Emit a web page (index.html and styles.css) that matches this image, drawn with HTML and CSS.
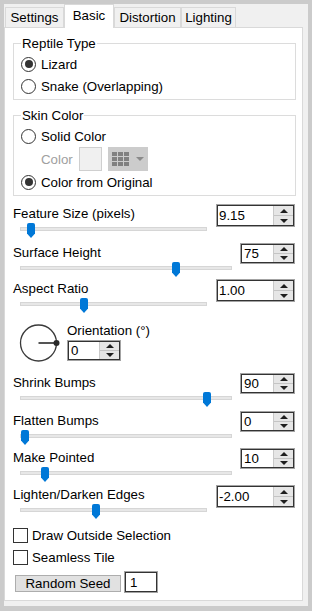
FILE: index.html
```html
<!DOCTYPE html>
<html lang="en">
<head>
    <meta charset="UTF-8">
    <title>Reptile Skin - Basic</title>
    <link rel="stylesheet" href="styles.css">
</head>
<body>
<div class="window">
    <div class="tabs">
        <div class="tab w-settings">Settings</div>
        <div class="tab w-basic active">Basic</div>
        <div class="tab w-distortion">Distortion</div>
        <div class="tab w-lighting">Lighting</div>
    </div>

    <div class="pane">
        <fieldset class="group">
            <legend>Reptile Type</legend>
            <div class="opt"><span class="radio on"></span>Lizard</div>
            <div class="opt"><span class="radio"></span>Snake (Overlapping)</div>
        </fieldset>

        <fieldset class="group skin">
            <legend>Skin Color</legend>
            <div class="opt short"><span class="radio"></span>Solid Color</div>
            <div class="color-row">
                <span class="dim">Color</span>
                <span class="swatch"></span>
                <span class="palette">
                    <svg width="17" height="14" viewBox="0 0 17 14">
                        <g fill="#808080">
                            <rect x="0" y="0" width="5" height="4"/><rect x="6" y="0" width="5" height="4"/><rect x="12" y="0" width="5" height="4"/>
                            <rect x="0" y="5" width="5" height="4"/><rect x="6" y="5" width="5" height="4"/><rect x="12" y="5" width="5" height="4"/>
                            <rect x="0" y="10" width="5" height="4"/><rect x="6" y="10" width="5" height="4"/><rect x="12" y="10" width="5" height="4"/>
                        </g>
                    </svg>
                    <span class="drop"></span>
                </span>
            </div>
            <div class="opt"><span class="radio on"></span>Color from Original</div>
        </fieldset>

        <div class="ctl feature">
            <div class="ctl-main">
                <div class="ctl-label">Feature Size (pixels)</div>
                <div class="slider"><span class="thumb" style="left:7px"></span></div>
            </div>
            <div class="spin wide"><div class="spin-in"><span class="val">9.15</span><span class="arrows"><span class="arr"><i class="up"></i></span><span class="arr"><i class="dn"></i></span></span></div></div>
        </div>

        <div class="ctl surface">
            <div class="ctl-main">
                <div class="ctl-label">Surface Height</div>
                <div class="slider narrow"><span class="thumb" style="left:152px"></span></div>
            </div>
            <div class="spin short"><div class="spin-in"><span class="val">75</span><span class="arrows"><span class="arr"><i class="up"></i></span><span class="arr"><i class="dn"></i></span></span></div></div>
        </div>

        <div class="ctl aspect">
            <div class="ctl-main">
                <div class="ctl-label">Aspect Ratio</div>
                <div class="slider"><span class="thumb" style="left:60px"></span></div>
            </div>
            <div class="spin wide"><div class="spin-in"><span class="val">1.00</span><span class="arrows"><span class="arr"><i class="up"></i></span><span class="arr"><i class="dn"></i></span></span></div></div>
        </div>

        <div class="orient">
            <svg class="dial" width="46" height="40" viewBox="0 0 46 40">
                <circle cx="19.5" cy="20" r="18" fill="none" stroke="#3a3a3a" stroke-width="1.3"/>
                <line x1="19.5" y1="20" x2="37.5" y2="20" stroke="#555" stroke-width="2"/>
                <circle cx="37.5" cy="20" r="3" fill="#2a2a2a"/>
            </svg>
            <div class="orient-main">
                <div class="ctl-label">Orientation (&deg;)</div>
                <div class="spin orient-spin"><div class="spin-in"><span class="val">0</span><span class="arrows"><span class="arr"><i class="up"></i></span><span class="arr"><i class="dn"></i></span></span></div></div>
            </div>
        </div>

        <div class="ctl shrink">
            <div class="ctl-main">
                <div class="ctl-label">Shrink Bumps</div>
                <div class="slider narrow"><span class="thumb" style="left:183px"></span></div>
            </div>
            <div class="spin short"><div class="spin-in"><span class="val">90</span><span class="arrows"><span class="arr"><i class="up"></i></span><span class="arr"><i class="dn"></i></span></span></div></div>
        </div>

        <div class="ctl flatten">
            <div class="ctl-main">
                <div class="ctl-label">Flatten Bumps</div>
                <div class="slider narrow"><span class="thumb" style="left:1px"></span></div>
            </div>
            <div class="spin short"><div class="spin-in"><span class="val">0</span><span class="arrows"><span class="arr"><i class="up"></i></span><span class="arr"><i class="dn"></i></span></span></div></div>
        </div>

        <div class="ctl pointed">
            <div class="ctl-main">
                <div class="ctl-label">Make Pointed</div>
                <div class="slider narrow"><span class="thumb" style="left:21px"></span></div>
            </div>
            <div class="spin short"><div class="spin-in"><span class="val">10</span><span class="arrows"><span class="arr"><i class="up"></i></span><span class="arr"><i class="dn"></i></span></span></div></div>
        </div>

        <div class="ctl edges">
            <div class="ctl-main">
                <div class="ctl-label">Lighten/Darken Edges</div>
                <div class="slider"><span class="thumb" style="left:72px"></span></div>
            </div>
            <div class="spin wide"><div class="spin-in"><span class="val">-2.00</span><span class="arrows"><span class="arr"><i class="up"></i></span><span class="arr"><i class="dn"></i></span></span></div></div>
        </div>

        <div class="check first"><span class="box"></span>Draw Outside Selection</div>
        <div class="check"><span class="box"></span>Seamless Tile</div>

        <div class="seed-row">
            <button class="btn">Random Seed</button>
            <div class="seed"><span class="seed-in">1</span></div>
        </div>
    </div>
</div>
</body>
</html>
```

FILE: styles.css
```css
html, body {
    margin: 0;
    height: 100%;
}
body {
    background: #cbcbcb;
    padding: 4px 4px 0 4px;
    box-sizing: border-box;
    font-family: "Liberation Sans", Arial, sans-serif;
    font-size: 13.3px;
    color: #000;
}
.window {
    background: #f0f0f0;
    height: 602px;
}

/* tabs */
.tabs {
    display: flex;
    align-items: flex-end;
    height: 23px;
    padding-left: 1px;
}
.tab {
    box-sizing: border-box;
    height: 20px;
    line-height: 19px;
    text-align: center;
    border: 1px solid #d9d9d9;
    border-bottom: none;
    background: #f0f0f0;
}
.tab.active {
    height: 24px;
    line-height: 21px;
    margin-bottom: -1px;
    background: #fff;
    position: relative;
    z-index: 1;
}
.w-settings { width: 59px; }
.w-basic { width: 50px; }
.w-distortion { width: 67px; }
.w-lighting { width: 55px; }

.pane {
    box-sizing: border-box;
    width: 299px;
    height: 574px;
    background: #fff;
    border: 1px solid #d9d9d9;
    padding: 8px 6px 0 8px;
}

/* group boxes */
.group {
    margin: 0;
    min-width: 0;
    border: 1px solid #dcdcdc;
    padding: 2px 7px 2px 7px;
}
.group legend {
    padding: 0 1px;
    line-height: 15px;
}
.group.skin {
    margin-top: 8px;
    padding-top: 3px;
}
.opt {
    display: flex;
    align-items: center;
    height: 22px;
}
.opt.short { height: 21px; }
.radio {
    box-sizing: border-box;
    width: 15px;
    height: 15px;
    border: 1px solid #333;
    border-radius: 50%;
    margin-right: 5px;
    display: flex;
    align-items: center;
    justify-content: center;
    background: #fff;
}
.radio.on::after {
    content: "";
    width: 8px;
    height: 8px;
    border-radius: 50%;
    background: #333;
}
.color-row {
    display: flex;
    align-items: center;
    height: 24px;
    padding-left: 20px;
}
.dim {
    color: #a0a0a0;
    width: 38px;
}
.swatch {
    box-sizing: border-box;
    width: 23px;
    height: 24px;
    background: #f0f0f0;
    border: 1px solid #cfcfcf;
}
.palette {
    box-sizing: border-box;
    width: 40px;
    height: 24px;
    margin-left: 6px;
    background: #cccccc;
    display: flex;
    align-items: center;
    padding-left: 4px;
}
.palette svg { display: block; }
.drop {
    margin-left: 7px;
    width: 0;
    height: 0;
    border-left: 4px solid transparent;
    border-right: 4px solid transparent;
    border-top: 4px solid #8a8a8a;
}

/* slider + spinner rows */
.ctl {
    display: flex;
    align-items: flex-start;
    margin-right: 1px;
}
.ctl-main { flex: 1; }
.ctl-label {
    height: 19px;
    line-height: 19px;
}
.feature { margin-top: 8px; }
.surface { margin-top: 6px; }
.aspect { margin-top: 3px; }
.shrink { margin-top: 10px; }
.flatten { margin-top: 5px; }
.pointed { margin-top: 4px; }
.edges { margin-top: 4px; }

.slider {
    position: relative;
    height: 14px;
    margin: 0 9px 0 7px;
}
.slider.narrow { margin-right: 8px; }
.slider::before {
    content: "";
    position: absolute;
    left: 0;
    right: 0;
    top: 4px;
    height: 4px;
    box-sizing: border-box;
    background: #e7e7e7;
    border: 1px solid #d6d6d6;
}
.thumb {
    position: absolute;
    top: 0;
    width: 8px;
    height: 15px;
    background: #0078d7;
    border-radius: 2px 2px 0 0;
    clip-path: polygon(0 0, 100% 0, 100% 70%, 50% 100%, 0 70%);
}

.spin {
    box-sizing: border-box;
    display: flex;
    border: 1px solid #a3a3a3;
    background: #fff;
}
.spin.wide { width: 79px; height: 23px; }
.spin.short { width: 55px; height: 21px; }
.spin.orient-spin { width: 54px; height: 21px; }
.spin-in {
    flex: 1;
    display: flex;
    border: 1px solid #333;
}
.val {
    flex: 1;
    padding-left: 1px;
    display: flex;
    align-items: center;
}
.short .val, .orient-spin .val { padding-left: 2px; }
.arrows {
    width: 19px;
    display: flex;
    flex-direction: column;
    background: #e6e6e6;
    border-left: 1px solid #c9c9c9;
}
.arr {
    flex: 1;
    display: flex;
    align-items: center;
    justify-content: center;
}
.arr + .arr { border-top: 1px solid #c4c4c4; }
.up, .dn {
    width: 0;
    height: 0;
    border-left: 4px solid transparent;
    border-right: 4px solid transparent;
}
.up { border-bottom: 4px solid #1e1e1e; }
.dn { border-top: 4px solid #1e1e1e; }

/* orientation dial */
.orient {
    display: flex;
    margin-top: 9px;
    padding-left: 6px;
}
.dial {
    display: block;
    margin-top: 2px;
}
.orient-main { margin-left: 2px; }

/* checkboxes and seed */
.check {
    display: flex;
    align-items: center;
    height: 23px;
}
.check.first {
    height: 22px;
    margin-top: 6px;
}
.box {
    box-sizing: border-box;
    width: 15px;
    height: 15px;
    border: 1px solid #333;
    margin-right: 4px;
}
.seed-row {
    display: flex;
    align-items: flex-end;
    margin-top: 2px;
    margin-left: 2px;
    height: 22px;
}
.btn {
    box-sizing: border-box;
    width: 106px;
    height: 17px;
    margin: 0 3px 1px 0;
    padding: 0;
    font: inherit;
    line-height: 15px;
    color: #000;
    background: #e1e1e1;
    border: 1px solid #adadad;
}
.seed {
    box-sizing: border-box;
    width: 34px;
    height: 22px;
    display: flex;
    border: 1px solid #a3a3a3;
}
.seed-in {
    flex: 1;
    border: 1px solid #333;
    padding-left: 4px;
    display: flex;
    align-items: center;
}
```
